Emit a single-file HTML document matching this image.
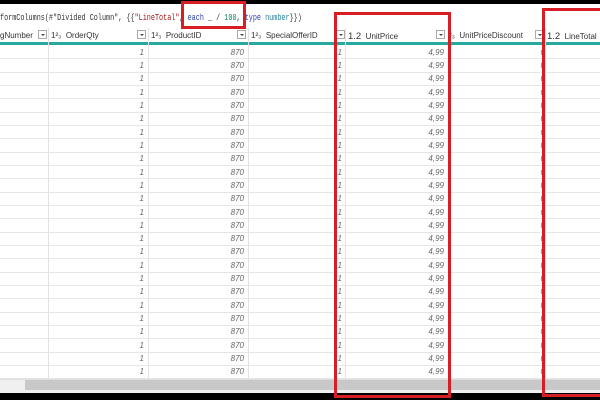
<!DOCTYPE html>
<html><head><meta charset="utf-8"><style>
*{margin:0;padding:0;box-sizing:border-box}
body{width:600px;height:400px;overflow:hidden;background:#fff;position:relative;font-family:"Liberation Sans",sans-serif}
.abs{position:absolute}
.fx{left:0;top:13px;font-family:"Liberation Mono",monospace;font-size:9px;color:#333;white-space:nowrap;transform:scaleX(0.755);transform-origin:0 0}
.hdr{top:28px;height:15px;left:0;width:600px;background:#fff;border-bottom:1px solid #ddd}
.teal{top:42px;height:3px;left:0;width:600px;background:#27a8a0}
.ht{top:31px;font-size:8px;color:#333;white-space:nowrap}
.dd{top:30px;width:9px;height:9px;border:1px solid #aaa;background:#fff}
.dd:after{content:"";position:absolute;left:2px;top:3px;border-left:2px solid transparent;border-right:2px solid transparent;border-top:2px solid #444}
.vl{top:28px;height:351px;width:1px;background:#e2e2e2}
.hl{left:0;width:600px;height:1px;background:#e6e6e6}
.v{font-size:8px;font-style:italic;color:#666;text-align:right;white-space:nowrap}
.red{border:3px solid #d81e25}
</style></head><body>
<div class="abs" style="left:0;top:0;width:600px;height:4px;background:#000"></div>
<div class="abs fx">formColumns(#"Divided Column", {{<span style="color:#a31515">"LineTotal"</span>, <span style="color:#2a3fb0">each</span> _ / <span style="color:#098658">100</span>, <span style="color:#2a3fb0">type</span> <span style="color:#267f99">number</span>}})</div>
<div class="abs hdr"></div>
<div class="abs teal"></div>
<div class="abs ht" style="left:0">gNumber</div>
<div class="abs ht" style="left:51px">1²₃ &nbsp;OrderQty</div>
<div class="abs ht" style="left:151px">1²₃ &nbsp;ProductID</div>
<div class="abs ht" style="left:251px">1²₃ &nbsp;SpecialOfferID</div>
<div class="abs ht" style="left:348px"><span style="font-size:9.5px">1.2</span> &nbsp;UnitPrice</div>
<div class="abs ht" style="left:449px">²₃ &nbsp;UnitPriceDiscount</div>
<div class="abs ht" style="left:547px"><span style="font-size:9.5px">1.2</span> &nbsp;LineTotal</div>
<div class="abs dd" style="left:38px"></div>
<div class="abs dd" style="left:137px"></div>
<div class="abs dd" style="left:237px"></div>
<div class="abs dd" style="left:336px"></div>
<div class="abs dd" style="left:436px"></div>
<div class="abs dd" style="left:535px"></div>
<div class="abs vl" style="left:48px"></div>
<div class="abs vl" style="left:148px"></div>
<div class="abs vl" style="left:248px"></div>
<div class="abs vl" style="left:345px"></div>
<div class="abs vl" style="left:448px"></div>
<div class="abs vl" style="left:545px"></div>
<div id="rows"></div>
<div class="abs" style="left:0;top:379px;width:600px;height:14px;background:#f0f0f0;border-top:1px solid #ddd"></div>
<div class="abs" style="left:25px;top:380px;width:575px;height:10px;background:#c8c8c8"></div>
<div class="abs" style="left:0;top:393px;width:600px;height:7px;background:#000"></div>
<div class="abs red" style="left:181px;top:1px;width:65px;height:28px"></div>
<div class="abs red" style="left:334px;top:12px;width:117px;height:386px"></div>
<div class="abs red" style="left:542px;top:8px;width:64px;height:389px"></div>
<script>
var h="";
for(var i=0;i<25;i++){var t=45+i*13.33;
h+='<div class="abs hl" style="top:'+(t+13.33).toFixed(1)+'px"></div>';
var ty=(t+2.5).toFixed(1);
h+='<div class="abs v" style="top:'+ty+'px;right:456px">1</div>';
h+='<div class="abs v" style="top:'+ty+'px;right:356px">870</div>';
h+='<div class="abs v" style="top:'+ty+'px;right:258px">1</div>';
h+='<div class="abs v" style="top:'+ty+'px;right:156px">4,99</div>';
h+='<div class="abs v" style="top:'+ty+'px;right:55px">0</div>';}
document.getElementById("rows").innerHTML=h;
</script>
</body></html>
